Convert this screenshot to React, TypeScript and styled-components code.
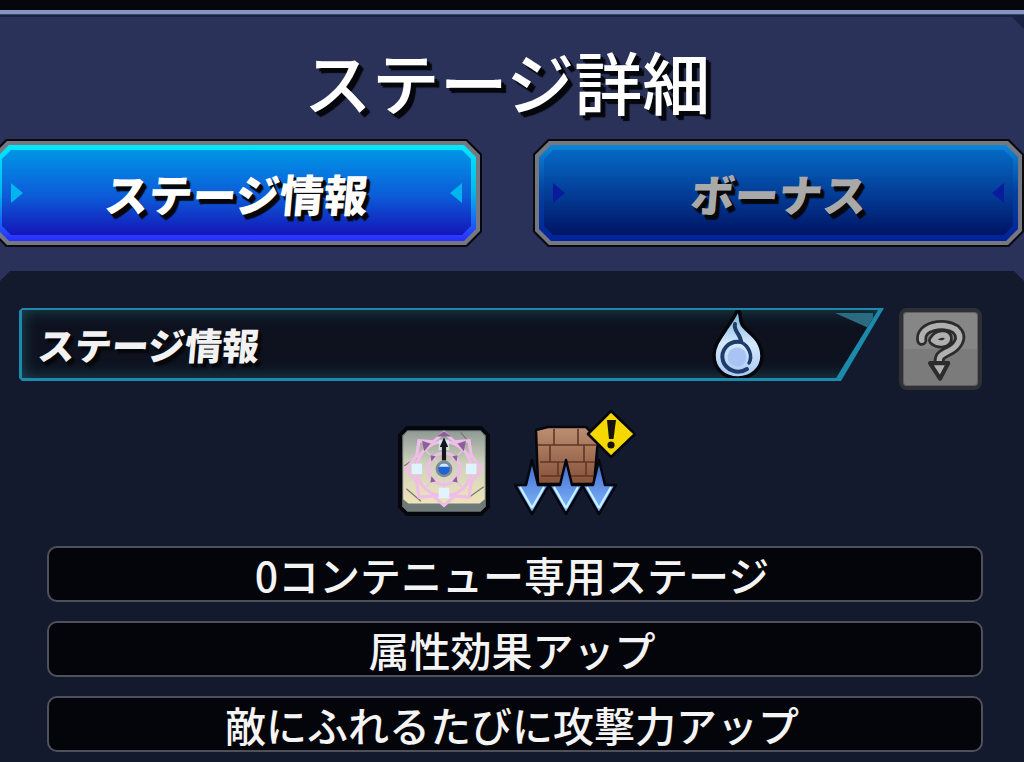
import { FC } from 'react';
import styled, { createGlobalStyle } from 'styled-components';

const JP = `"Noto Sans CJK JP", "Noto Sans", sans-serif`;
const CUT = (c: number) =>
  `polygon(${c}px 0, calc(100% - ${c}px) 0, 100% ${c}px, 100% calc(100% - ${c}px), calc(100% - ${c}px) 100%, ${c}px 100%, 0 calc(100% - ${c}px), 0 ${c}px)`;

const effects = ['0コンテニュー専用ステージ', '属性効果アップ', '敵にふれるたびに攻撃力アップ'];

const FlameIcon: FC = () => (
  <FlameSvg viewBox="0 0 52 74" aria-hidden="true">
    <defs>
      <linearGradient id="flameFill" x1="0" y1="0" x2="0" y2="1">
        <stop offset="0" stopColor="#6fb0dc" />
        <stop offset="0.5" stopColor="#d4e8fb" />
        <stop offset="1" stopColor="#a9c8f5" />
      </linearGradient>
    </defs>
    <path
      d="M26 2C30 8 27 14 31 19C36 25 42 28 46 35C49 40 50 44 50 49C50 62 39 71 26 71C12 71 2 62 2 48C2 38 9 30 14 22C19 15 23 9 26 2Z"
      fill="url(#flameFill)"
      stroke="#05070c"
      strokeWidth="3.5"
      strokeLinejoin="round"
    />
    <path
      d="M23 17C21 24 29 27 29 35C16 33 8 44 11 54C14 63 26 68 35 62"
      fill="none"
      stroke="#1f3b68"
      strokeWidth="4"
      strokeLinecap="round"
    />
    <path d="M29 35C37 39 41 49 37 56" fill="none" stroke="#1f3b68" strokeWidth="3.5" strokeLinecap="round" />
    <circle cx="25" cy="50" r="9.5" fill="#a9c4f4" />
  </FlameSvg>
);

const QuestionIcon: FC = () => (
  <svg width="75" height="74" viewBox="0 0 81 81" aria-hidden="true">
    <g fill="none" strokeLinecap="round" strokeLinejoin="round">
      <path
        d="M20 31C17 16 44 10 57 19C67 28 59 39 47 44C41 47 39 49 39 54M33 31C37 24 48 23 48 29C48 34 39 36 33 31"
        stroke="#2c2c2c"
        strokeWidth="12"
      />
      <path
        d="M20 31C17 16 44 10 57 19C67 28 59 39 47 44C41 47 39 49 39 54M33 31C37 24 48 23 48 29C48 34 39 36 33 31"
        stroke="#b0b0b0"
        strokeWidth="6"
      />
    </g>
    <path d="M29 56L49 56L40 73Z" fill="#b0b0b0" stroke="#2c2c2c" strokeWidth="4.5" strokeLinejoin="round" />
  </svg>
);

const TileIcon: FC = () => (
  <svg width="92" height="90" viewBox="2 2 88 86" aria-hidden="true">
    <defs>
      <linearGradient id="tileFill" x1="0" y1="0" x2="0" y2="1">
        <stop offset="0" stopColor="#8f9b96" />
        <stop offset="0.45" stopColor="#cfd2bc" />
        <stop offset="1" stopColor="#efe4ba" />
      </linearGradient>
    </defs>
    <path d="M10 2H82L90 10V80L82 88H10L2 80V10Z" fill="#05070c" />
    <path d="M11 6H81L86 11V79L81 84H11L6 79V11Z" fill="#6f7a78" />
    <path d="M11 7H81L85 12V72L80 76H12L7 72V12Z" fill="url(#tileFill)" />
    <path d="M8 40L20 32M62 8L72 20M70 70L84 60M10 62L24 74" stroke="#777b70" strokeWidth="1.2" fill="none" />
    <g stroke="#ddc9dd" strokeWidth="1.4">
      <path d="M46 18V68M21 43H71M28 25L64 61M64 25L28 61" />
    </g>
    <g fill="none" stroke="#efbde8" strokeWidth="3">
      <circle cx="46" cy="43" r="15" />
      <circle cx="46" cy="43" r="26" />
      <path d="M46 8L56 17L70 16L72 30L82 43L72 56L70 70L56 69L46 78L36 69L22 70L20 56L10 43L20 30L22 16L36 17Z" />
    </g>
    <g fill="#8c5f9c">
      <path d="M25 16L33 19L27 26Z" />
      <path d="M67 16L59 19L65 26Z" />
      <path d="M33 30L38 31L34 36Z" />
      <path d="M59 30L54 31L58 36Z" />
      <path d="M33 56L38 55L34 50Z" />
      <path d="M59 56L54 55L58 50Z" />
      <path d="M39 12H53L46 7Z" />
    </g>
    <g fill="#dff4ff">
      <rect x="15" y="38" width="10" height="10" />
      <rect x="67" y="38" width="10" height="10" />
      <rect x="41" y="61" width="10" height="10" />
      <rect x="41" y="15" width="10" height="10" fillOpacity="0.7" />
    </g>
    <path d="M46 13L50 22H48V35H44V22H42Z" fill="#14161c" />
    <circle cx="46" cy="43" r="8" fill="#7f8a92" />
    <circle cx="46" cy="43" r="5.5" fill="#1f62d8" />
    <path d="M41 41A5.5 5.5 0 0 1 51 41Z" fill="#d5e6f5" />
  </svg>
);

const ArrowShape: FC<{ x: number }> = ({ x }) => (
  <g transform={`translate(${x} 0)`}>
    <path
      d="M18 50L24 75H35L18 104L1 75H12Z"
      fill="url(#arrowFill)"
      stroke="#05070c"
      strokeWidth="2.5"
      strokeLinejoin="round"
    />
    <path d="M18 98L6 77M18 98L30 77" stroke="#c9f2ff" strokeWidth="2.2" fill="none" />
  </g>
);

const WallIcon: FC = () => (
  <svg width="122" height="106" viewBox="0 0 122 106" aria-hidden="true">
    <defs>
      <linearGradient id="arrowFill" x1="0" y1="0" x2="0" y2="1">
        <stop offset="0" stopColor="#3a66cc" />
        <stop offset="1" stopColor="#86bcff" />
      </linearGradient>
      <linearGradient id="wallFill" x1="0" y1="0" x2="0" y2="1">
        <stop offset="0" stopColor="#bd8f72" />
        <stop offset="1" stopColor="#855038" />
      </linearGradient>
    </defs>
    <path d="M22 20L34 17H72L84 29L80 74H24Z" fill="url(#wallFill)" stroke="#05070c" strokeWidth="2.5" strokeLinejoin="round" />
    <path
      d="M24 35H83M26 52H81M27 66H79M40 19V35M64 19V35M36 35V52M70 35V52M44 52V66M72 52V66"
      stroke="#5f3624"
      strokeWidth="1.6"
      fill="none"
    />
    <ArrowShape x={0} />
    <ArrowShape x={34} />
    <ArrowShape x={67} />
    <path d="M97 1L121 24L97 47L74 24Z" fill="#f5d800" stroke="#05070c" strokeWidth="2.5" strokeLinejoin="round" />
    <path d="M93 10H102L99.5 29H95Z" fill="#15130a" />
    <circle cx="97" cy="35" r="3.6" fill="#15130a" />
  </svg>
);

const App: FC = () => (
  <Page>
    <GlobalStyle />
    <TopBar />
    <TopLine />
    <Panel>
      <Title>ステージ詳細</Title>
      <Tabs>
        <TabOuter>
          <TabMetal>
            <TabFrame $active>
              <TabFace $active>
                <Marker $side="left" $active />
                <TabLabel>ステージ情報</TabLabel>
                <Marker $side="right" $active />
              </TabFace>
            </TabFrame>
          </TabMetal>
        </TabOuter>
        <TabOuter>
          <TabMetal>
            <TabFrame>
              <TabFace>
                <Marker $side="left" />
                <TabLabel $dim>ボーナス</TabLabel>
                <Marker $side="right" />
              </TabFace>
            </TabFrame>
          </TabMetal>
        </TabOuter>
      </Tabs>
      <Content>
        <InfoRow>
          <InfoBar>
            <InfoInner>
              <InfoLabel>ステージ情報</InfoLabel>
              <FlameIcon />
              <CornerMark />
            </InfoInner>
          </InfoBar>
          <HelpButton>
            <QuestionIcon />
          </HelpButton>
        </InfoRow>
        <Gimmicks>
          <TileIcon />
          <WallIcon />
        </Gimmicks>
        <EffectList>
          {effects.map((text) => (
            <Effect key={text}>{text}</Effect>
          ))}
        </EffectList>
      </Content>
    </Panel>
  </Page>
);

export default App;

const GlobalStyle = createGlobalStyle`
  html, body {
    margin: 0;
    padding: 0;
    background: #05070c;
  }
`;

const Page = styled.div`
  width: 1024px;
  height: 762px;
  overflow: hidden;
  display: flex;
  flex-direction: column;
  background: #1b2140;
  font-family: ${JP};
  color: #fff;
`;

const TopBar = styled.div`
  height: 10px;
  flex: none;
  background: #05070c;
`;

const TopLine = styled.div`
  height: 7px;
  flex: none;
  background: linear-gradient(#8496bd 0 4px, #3a4468 4px 5px, #1b2140 5px);
`;

const Panel = styled.div`
  flex: 1;
  display: flex;
  flex-direction: column;
  background: #2a3259;
  clip-path: polygon(0 0, calc(100% - 12px) 0, 100% 12px, 100% 100%, 0 100%);
`;

const Title = styled.h1`
  margin: 0;
  height: 122px;
  flex: none;
  display: flex;
  align-items: center;
  justify-content: center;
  padding: 6px 10px 0 0;
  box-sizing: border-box;
  font-size: 68px;
  font-weight: 500;
  line-height: 1;
  text-shadow: 3px 3px 0 #05070c, 5px 5px 1px #05070c;
`;

const Tabs = styled.div`
  flex: none;
  display: grid;
  grid-template-columns: 491px 491px;
  column-gap: 51px;
  margin-left: -9px;
`;

const TabOuter = styled.div`
  height: 108px;
  padding: 2px;
  box-sizing: border-box;
  background: #08090f;
  clip-path: ${CUT(15)};
`;

const TabMetal = styled.div`
  height: 100%;
  padding: 4px;
  box-sizing: border-box;
  background: #77787f;
  clip-path: ${CUT(14)};
`;

const TabFrame = styled.div<{ $active?: boolean }>`
  height: 100%;
  padding: 5px 5px 6px;
  box-sizing: border-box;
  background: ${(p) =>
    p.$active ? 'linear-gradient(#00e8ff, #00b8e8 50%, #2a2cff)' : 'linear-gradient(#0a86d8, #03409f 50%, #00229a)'};
  clip-path: ${CUT(12)};
`;

const TabFace = styled.div<{ $active?: boolean }>`
  height: 100%;
  display: flex;
  align-items: center;
  justify-content: space-between;
  padding: 0 9px;
  box-sizing: border-box;
  background: ${(p) =>
    p.$active ? 'linear-gradient(#0096e6, #0d5ad8 55%, #1316b8)' : 'linear-gradient(#0569c4, #033a94 55%, #001464)'};
  clip-path: ${CUT(9)};
`;

const Marker = styled.span<{ $side: 'left' | 'right'; $active?: boolean }>`
  width: 0;
  height: 0;
  border-top: 10px solid transparent;
  border-bottom: 10px solid transparent;
  ${(p) => `border-${p.$side}: 12px solid ${p.$active ? '#00b4ee' : '#0a1c9c'};`}
`;

const TabLabel = styled.span<{ $dim?: boolean }>`
  display: inline-block;
  font-size: 44px;
  font-weight: 900;
  line-height: 1;
  color: ${(p) => (p.$dim ? '#a9a9a9' : '#fff')};
  transform: skewX(-5deg);
  text-shadow: 3px 3px 0 #05070c, 4px 5px 1px #05070c;
`;

const Content = styled.div`
  flex: 1;
  margin-top: 24px;
  padding: 37px 41px 0 19px;
  box-sizing: border-box;
  background: #141a2d;
  clip-path: polygon(10px 0, calc(100% - 10px) 0, 100% 10px, 100% 100%, 0 100%, 0 10px);
`;

const InfoRow = styled.div`
  display: flex;
  align-items: flex-start;
  gap: 15px;
`;

const InfoBar = styled.div`
  width: 865px;
  height: 73px;
  flex: none;
  padding: 2px 3px 3px;
  box-sizing: border-box;
  background: #1c8aab;
  clip-path: polygon(3px 0, 100% 0, 822px 100%, 3px 100%, 0 calc(100% - 3px), 0 3px);
`;

const InfoInner = styled.div`
  position: relative;
  height: 100%;
  display: flex;
  align-items: center;
  padding-left: 16px;
  box-sizing: border-box;
  background: #0e121e;
  box-shadow: inset 0 0 16px #1d4a5c;
  clip-path: polygon(0 0, calc(100% - 3px) 0, 814px 100%, 0 100%);
`;

const InfoLabel = styled.span`
  display: inline-block;
  font-size: 37px;
  font-weight: 900;
  line-height: 1;
  color: #f2f2f2;
  transform: skewX(-5deg);
  text-shadow: 3px 3px 0 #05070c, 4px 4px 2px #05070c;
`;

const FlameSvg = styled.svg`
  width: 52px;
  height: 74px;
  flex: none;
  margin-left: auto;
  margin-right: 117px;
`;

const CornerMark = styled.span`
  position: absolute;
  top: 3px;
  right: 8px;
  width: 0;
  height: 0;
  border-top: 17px solid #2a6b7f;
  border-left: 38px solid transparent;
`;

const HelpButton = styled.div`
  width: 83px;
  height: 82px;
  flex: none;
  display: flex;
  align-items: center;
  justify-content: center;
  box-sizing: border-box;
  border: 4px solid #2f3033;
  border-radius: 8px;
  background: linear-gradient(#868686 0 50%, #7b7b7b 50% 100%);
  box-shadow: inset 0 0 0 1px #5f6063;
  svg {
    flex: none;
  }
`;

const Gimmicks = styled.div`
  height: 106px;
  margin-top: 20px;
  display: flex;
  align-items: flex-end;
  justify-content: center;
  gap: 24px;
  padding-left: 32px;
`;

const EffectList = styled.div`
  margin: 30px 0 0 28px;
  display: flex;
  flex-direction: column;
  gap: 19px;
`;

const Effect = styled.div`
  height: 56px;
  display: flex;
  align-items: center;
  justify-content: center;
  padding-right: 6px;
  box-sizing: border-box;
  border: 2px solid #4e5159;
  border-radius: 10px;
  background: #04050a;
  font-size: 41px;
  font-weight: 500;
  line-height: 1;
  color: #f4f4f4;
`;
